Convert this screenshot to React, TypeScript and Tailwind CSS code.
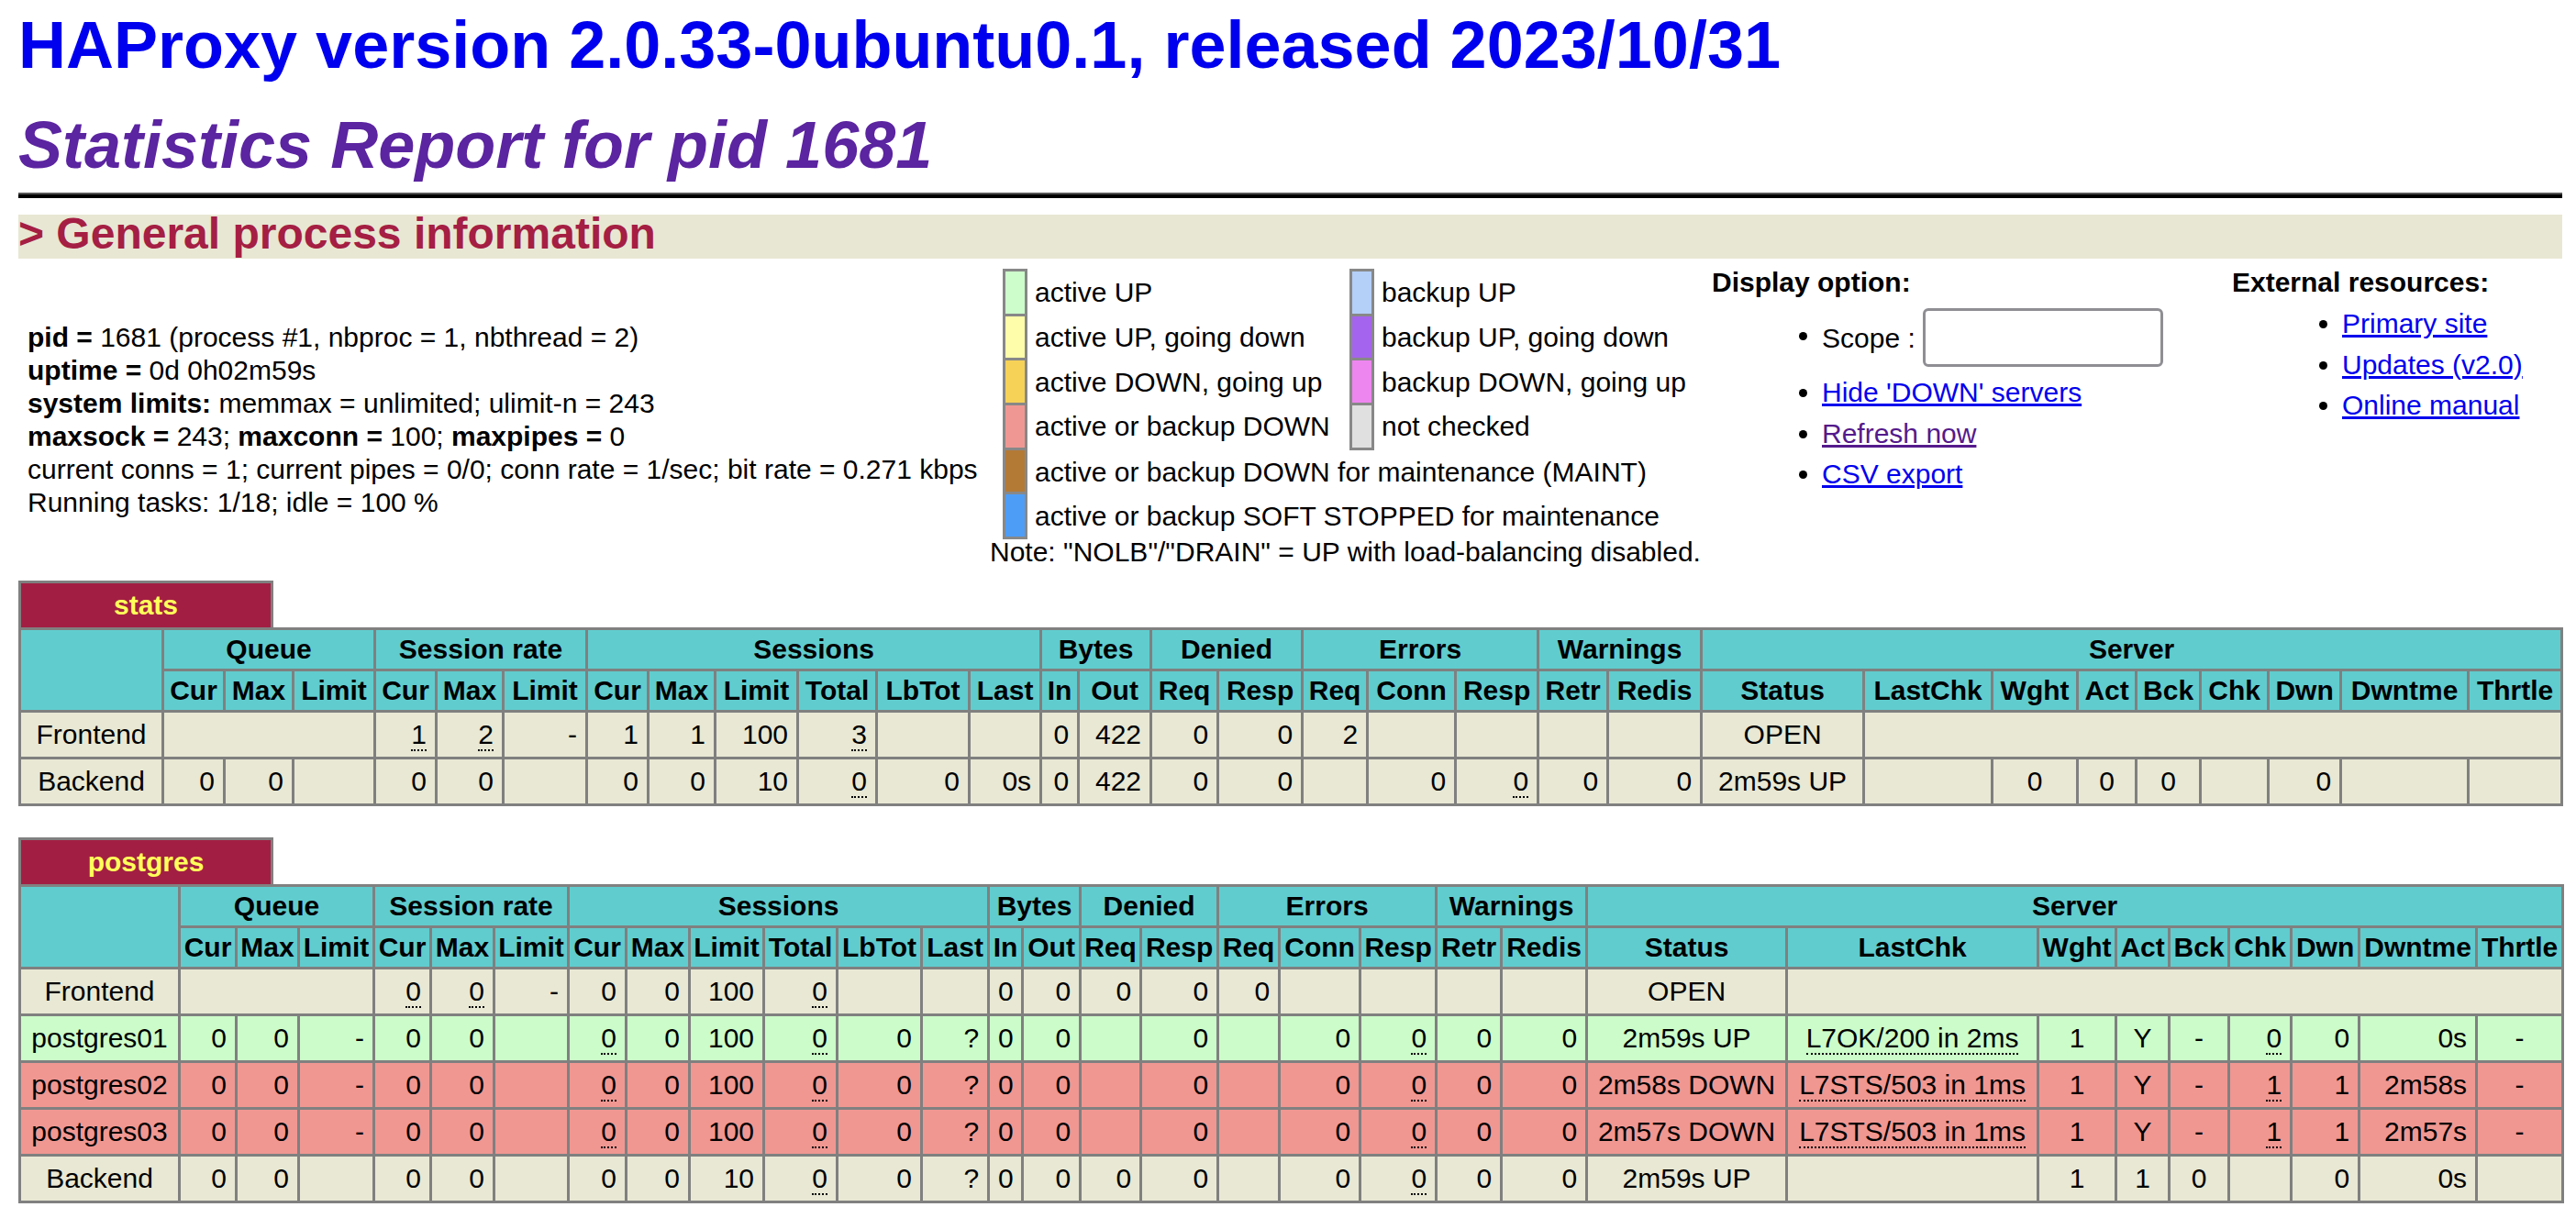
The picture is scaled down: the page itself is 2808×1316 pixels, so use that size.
import React from 'react';

type Cell = string | { t: string; u?: boolean; c?: boolean; span?: number };

const statsCols = [
  'w-[156px]', 'w-[67px]', 'w-[75px]', 'w-[89px]', 'w-[67px]', 'w-[73px]', 'w-[91px]', 'w-[67px]',
  'w-[73px]', 'w-[90px]', 'w-[86px]', 'w-[101px]', 'w-[78px]', 'w-[41px]', 'w-[79px]', 'w-[73px]',
  'w-[92px]', 'w-[71px]', 'w-[96px]', 'w-[90px]', 'w-[76px]', 'w-[102px]', 'w-[177px]', 'w-[140px]',
  'w-[93px]', 'w-[64px]', 'w-[70px]', 'w-[74px]', 'w-[79px]', 'w-[139px]', 'w-[102px]',
];

const pgCols = [
  'w-[174px]', 'w-[62px]', 'w-[68px]', 'w-[82px]', 'w-[62px]', 'w-[69px]', 'w-[81px]', 'w-[63px]',
  'w-[69px]', 'w-[81px]', 'w-[80px]', 'w-[92px]', 'w-[73px]', 'w-[37px]', 'w-[63px]', 'w-[66px]',
  'w-[84px]', 'w-[67px]', 'w-[88px]', 'w-[83px]', 'w-[71px]', 'w-[93px]', 'w-[218px]', 'w-[274px]',
  'w-[85px]', 'w-[58px]', 'w-[65px]', 'w-[68px]', 'w-[74px]', 'w-[128px]', 'w-[94px]',
];

const groups: [string, number][] = [
  ['Queue', 3],
  ['Session rate', 3],
  ['Sessions', 6],
  ['Bytes', 2],
  ['Denied', 2],
  ['Errors', 3],
  ['Warnings', 2],
  ['Server', 9],
];

const subs = [
  'Cur', 'Max', 'Limit', 'Cur', 'Max', 'Limit', 'Cur', 'Max', 'Limit', 'Total', 'LbTot', 'Last',
  'In', 'Out', 'Req', 'Resp', 'Req', 'Conn', 'Resp', 'Retr', 'Redis',
  'Status', 'LastChk', 'Wght', 'Act', 'Bck', 'Chk', 'Dwn', 'Dwntme', 'Thrtle',
];

const FRONT = 'bg-[#e8e8d4]';
const UP = 'bg-[#ccfcc9]';
const DOWN = 'bg-[#f09792]';

type Row = { bg: string; cells: Cell[] };

const statsRows: Row[] = [
  {
    bg: FRONT,
    cells: [
      { t: 'Frontend', c: true }, { t: '', span: 3 },
      { t: '1', u: true }, { t: '2', u: true }, '-',
      '1', '1', '100', { t: '3', u: true }, '', '',
      '0', '422', '0', '0', '2', '', '', '', '',
      { t: 'OPEN', c: true }, { t: '', span: 8 },
    ],
  },
  {
    bg: FRONT,
    cells: [
      { t: 'Backend', c: true }, '0', '0', '', '0', '0', '',
      '0', '0', '10', { t: '0', u: true }, '0', '0s',
      '0', '422', '0', '0', '', '0', { t: '0', u: true }, '0', '0',
      { t: '2m59s UP', c: true }, '', { t: '0', c: true }, { t: '0', c: true }, { t: '0', c: true }, '', '0', '', '',
    ],
  },
];

const server = (name: string, bg: string, status: string, chk: string, c: string, dwn: string, dt: string): Row => ({
  bg,
  cells: [
    { t: name, c: true }, '0', '0', '-', '0', '0', '',
    { t: '0', u: true }, '0', '100', { t: '0', u: true }, '0', '?',
    '0', '0', '', '0', '', '0', { t: '0', u: true }, '0', '0',
    { t: status, c: true }, { t: chk, c: true, u: true }, { t: '1', c: true }, { t: 'Y', c: true }, { t: '-', c: true },
    { t: c, u: true }, dwn, dt, { t: '-', c: true },
  ],
});

const pgRows: Row[] = [
  {
    bg: FRONT,
    cells: [
      { t: 'Frontend', c: true }, { t: '', span: 3 },
      { t: '0', u: true }, { t: '0', u: true }, '-',
      '0', '0', '100', { t: '0', u: true }, '', '',
      '0', '0', '0', '0', '0', '', '', '', '',
      { t: 'OPEN', c: true }, { t: '', span: 8 },
    ],
  },
  server('postgres01', UP, '2m59s UP', 'L7OK/200 in 2ms', '0', '0', '0s'),
  server('postgres02', DOWN, '2m58s DOWN', 'L7STS/503 in 1ms', '1', '1', '2m58s'),
  server('postgres03', DOWN, '2m57s DOWN', 'L7STS/503 in 1ms', '1', '1', '2m57s'),
  {
    bg: FRONT,
    cells: [
      { t: 'Backend', c: true }, '0', '0', '', '0', '0', '',
      '0', '0', '10', { t: '0', u: true }, '0', '?',
      '0', '0', '0', '0', '', '0', { t: '0', u: true }, '0', '0',
      { t: '2m59s UP', c: true }, '', { t: '1', c: true }, { t: '1', c: true }, { t: '0', c: true }, '', '0', '0s', '',
    ],
  },
];

function ProxyTable({ name, cols, rows }: { name: string; cols: string[]; rows: Row[] }) {
  return (
    <div>
      <div className="flex">
        <div className="w-[278px] border-[3px] border-b-0 border-[#808080] bg-[#a21f43] py-[6px] text-center font-bold leading-[36px] text-[#ffff5a]">
          {name}
        </div>
      </div>
      <table className="w-full table-fixed border-collapse">
        <colgroup>
          {cols.map((c, i) => (
            <col key={i} className={c} />
          ))}
        </colgroup>
        <thead>
          <tr className="bg-[#60ccce]">
            <th rowSpan={2} className="border-[3px] border-[#808080]" />
            {groups.map(([g, n]) => (
              <th key={g} colSpan={n} className="border-[3px] border-[#808080] p-[3px] text-center font-bold leading-[36px]">
                {g}
              </th>
            ))}
          </tr>
          <tr className="bg-[#60ccce]">
            {subs.map((s, i) => (
              <th key={i} className="whitespace-nowrap border-[3px] border-[#808080] p-[3px] text-center font-bold leading-[36px]">
                {s}
              </th>
            ))}
          </tr>
        </thead>
        <tbody>
          {rows.map((r, ri) => (
            <tr key={ri} className={r.bg}>
              {r.cells.map((cell, ci) => {
                const c = typeof cell === 'string' ? { t: cell } : cell;
                return (
                  <td
                    key={ci}
                    colSpan={c.span}
                    className={
                      'whitespace-nowrap border-[3px] border-[#808080] px-[9px] py-[6px] leading-[36px] ' +
                      (c.c ? 'text-center' : 'text-right')
                    }
                  >
                    {c.u ? <span className="border-b-2 border-dotted border-black">{c.t}</span> : c.t}
                  </td>
                );
              })}
            </tr>
          ))}
        </tbody>
      </table>
    </div>
  );
}

function Swatch({ color }: { color: string }) {
  return <td className={'border-[3px] border-[#888888] p-0 ' + color} />;
}

function Legend() {
  return (
    <div className="ml-[14px] mt-[11px]">
      <table className="table-fixed border-collapse">
        <colgroup>
          <col className="w-[24px]" />
          <col className="w-[354px]" />
          <col className="w-[24px]" />
          <col className="w-[280px]" />
        </colgroup>
        <tbody>
          <tr className="h-[48.7px]">
            <Swatch color="bg-[#cdfdcb]" />
            <td className="whitespace-nowrap pl-[8px]">active UP</td>
            <Swatch color="bg-[#b4cff8]" />
            <td className="whitespace-nowrap pl-[8px]">backup UP</td>
          </tr>
          <tr className="h-[48.7px]">
            <Swatch color="bg-[#fefeaa]" />
            <td className="whitespace-nowrap pl-[8px]">active UP, going down</td>
            <Swatch color="bg-[#a564ee]" />
            <td className="whitespace-nowrap pl-[8px]">backup UP, going down</td>
          </tr>
          <tr className="h-[48.7px]">
            <Swatch color="bg-[#f6d257]" />
            <td className="whitespace-nowrap pl-[8px]">active DOWN, going up</td>
            <Swatch color="bg-[#ee86ef]" />
            <td className="whitespace-nowrap pl-[8px]">backup DOWN, going up</td>
          </tr>
          <tr className="h-[48.7px]">
            <Swatch color="bg-[#ef9893]" />
            <td className="whitespace-nowrap pl-[8px]">active or backup DOWN</td>
            <Swatch color="bg-[#e0e0e0]" />
            <td className="whitespace-nowrap pl-[8px]">not checked</td>
          </tr>
          <tr className="h-[48.7px]">
            <Swatch color="bg-[#b37a36]" />
            <td colSpan={3} className="whitespace-nowrap pl-[8px]">
              active or backup DOWN for maintenance (MAINT)
            </td>
          </tr>
          <tr className="h-[48.7px]">
            <Swatch color="bg-[#4d9df7]" />
            <td colSpan={3} className="whitespace-nowrap pl-[8px]">
              active or backup SOFT STOPPED for maintenance
            </td>
          </tr>
        </tbody>
      </table>
      <div className="-ml-[14px] -mt-[4px] whitespace-nowrap leading-[36px]">
        Note: "NOLB"/"DRAIN" = UP with load-balancing disabled.
      </div>
    </div>
  );
}

export default function App() {
  return (
    <div className="min-h-screen bg-white pl-[20px] pr-[15px] pt-[8px] font-['Liberation_Sans',Arial,sans-serif] text-[30px] text-black">
      <h1 className="text-[72px] font-bold leading-[82px] text-[#0000ee]">
        HAProxy version 2.0.33-0ubuntu0.1, released 2023/10/31
      </h1>
      <h2 className="mt-[27px] text-[72px] font-bold italic leading-[82px] text-[#5b24a0]">
        Statistics Report for pid 1681
      </h2>
      <div className="mt-[11px] h-[6px] border-t-2 border-b-4 border-t-[#555555] border-b-black" />
      <h3 className="mt-[18px] h-[48px] bg-[#e8e7d3] text-[48px] font-bold leading-[42px] text-[#a51e43]">
        &gt; General process information
      </h3>

      <div className="grid grid-cols-[1059px_787px_567px_1fr]">
        <div className="mt-[68px] whitespace-nowrap pl-[10px] leading-[36px]">
          <div>
            <b>pid = </b>1681 (process #1, nbproc = 1, nbthread = 2)
          </div>
          <div>
            <b>uptime = </b>0d 0h02m59s
          </div>
          <div>
            <b>system limits:</b> memmax = unlimited; ulimit-n = 243
          </div>
          <div>
            <b>maxsock = </b>243; <b>maxconn = </b>100; <b>maxpipes = </b>0
          </div>
          <div>current conns = 1; current pipes = 0/0; conn rate = 1/sec; bit rate = 0.271 kbps</div>
          <div>Running tasks: 1/18; idle = 100 %</div>
        </div>

        <Legend />

        <div className="mt-[8px] whitespace-nowrap">
          <div className="font-bold leading-[36px]">Display option:</div>
          <ul className="mt-[10px] list-disc pl-[120px]">
            <li className="h-[64px]">
              <span className="align-middle">Scope : </span>
              <input
                type="text"
                className="h-[64px] w-[262px] rounded-[6px] border-[3px] border-[#8e8e93] bg-white align-middle"
              />
            </li>
            <li className="mt-[10px] leading-[36px]">
              <a href="#" className="text-[#0000ee] underline">
                Hide 'DOWN' servers
              </a>
            </li>
            <li className="mt-[8.5px] leading-[36px]">
              <a href="#" className="text-[#551a8b] underline">
                Refresh now
              </a>
            </li>
            <li className="mt-[8.5px] leading-[36px]">
              <a href="#" className="text-[#0000ee] underline">
                CSV export
              </a>
            </li>
          </ul>
        </div>

        <div className="mt-[8px] whitespace-nowrap">
          <div className="font-bold leading-[36px]">External resources:</div>
          <ul className="mt-[9px] list-disc pl-[120px]">
            <li className="leading-[36px]">
              <a href="#" className="text-[#0000ee] underline">
                Primary site
              </a>
            </li>
            <li className="mt-[8.5px] leading-[36px]">
              <a href="#" className="text-[#0000ee] underline">
                Updates (v2.0)
              </a>
            </li>
            <li className="mt-[8.5px] leading-[36px]">
              <a href="#" className="text-[#0000ee] underline">
                Online manual
              </a>
            </li>
          </ul>
        </div>
      </div>

      <div className="mt-[13px]">
        <ProxyTable name="stats" cols={statsCols} rows={statsRows} />
      </div>
      <div className="mt-[34px]">
        <ProxyTable name="postgres" cols={pgCols} rows={pgRows} />
      </div>
    </div>
  );
}
